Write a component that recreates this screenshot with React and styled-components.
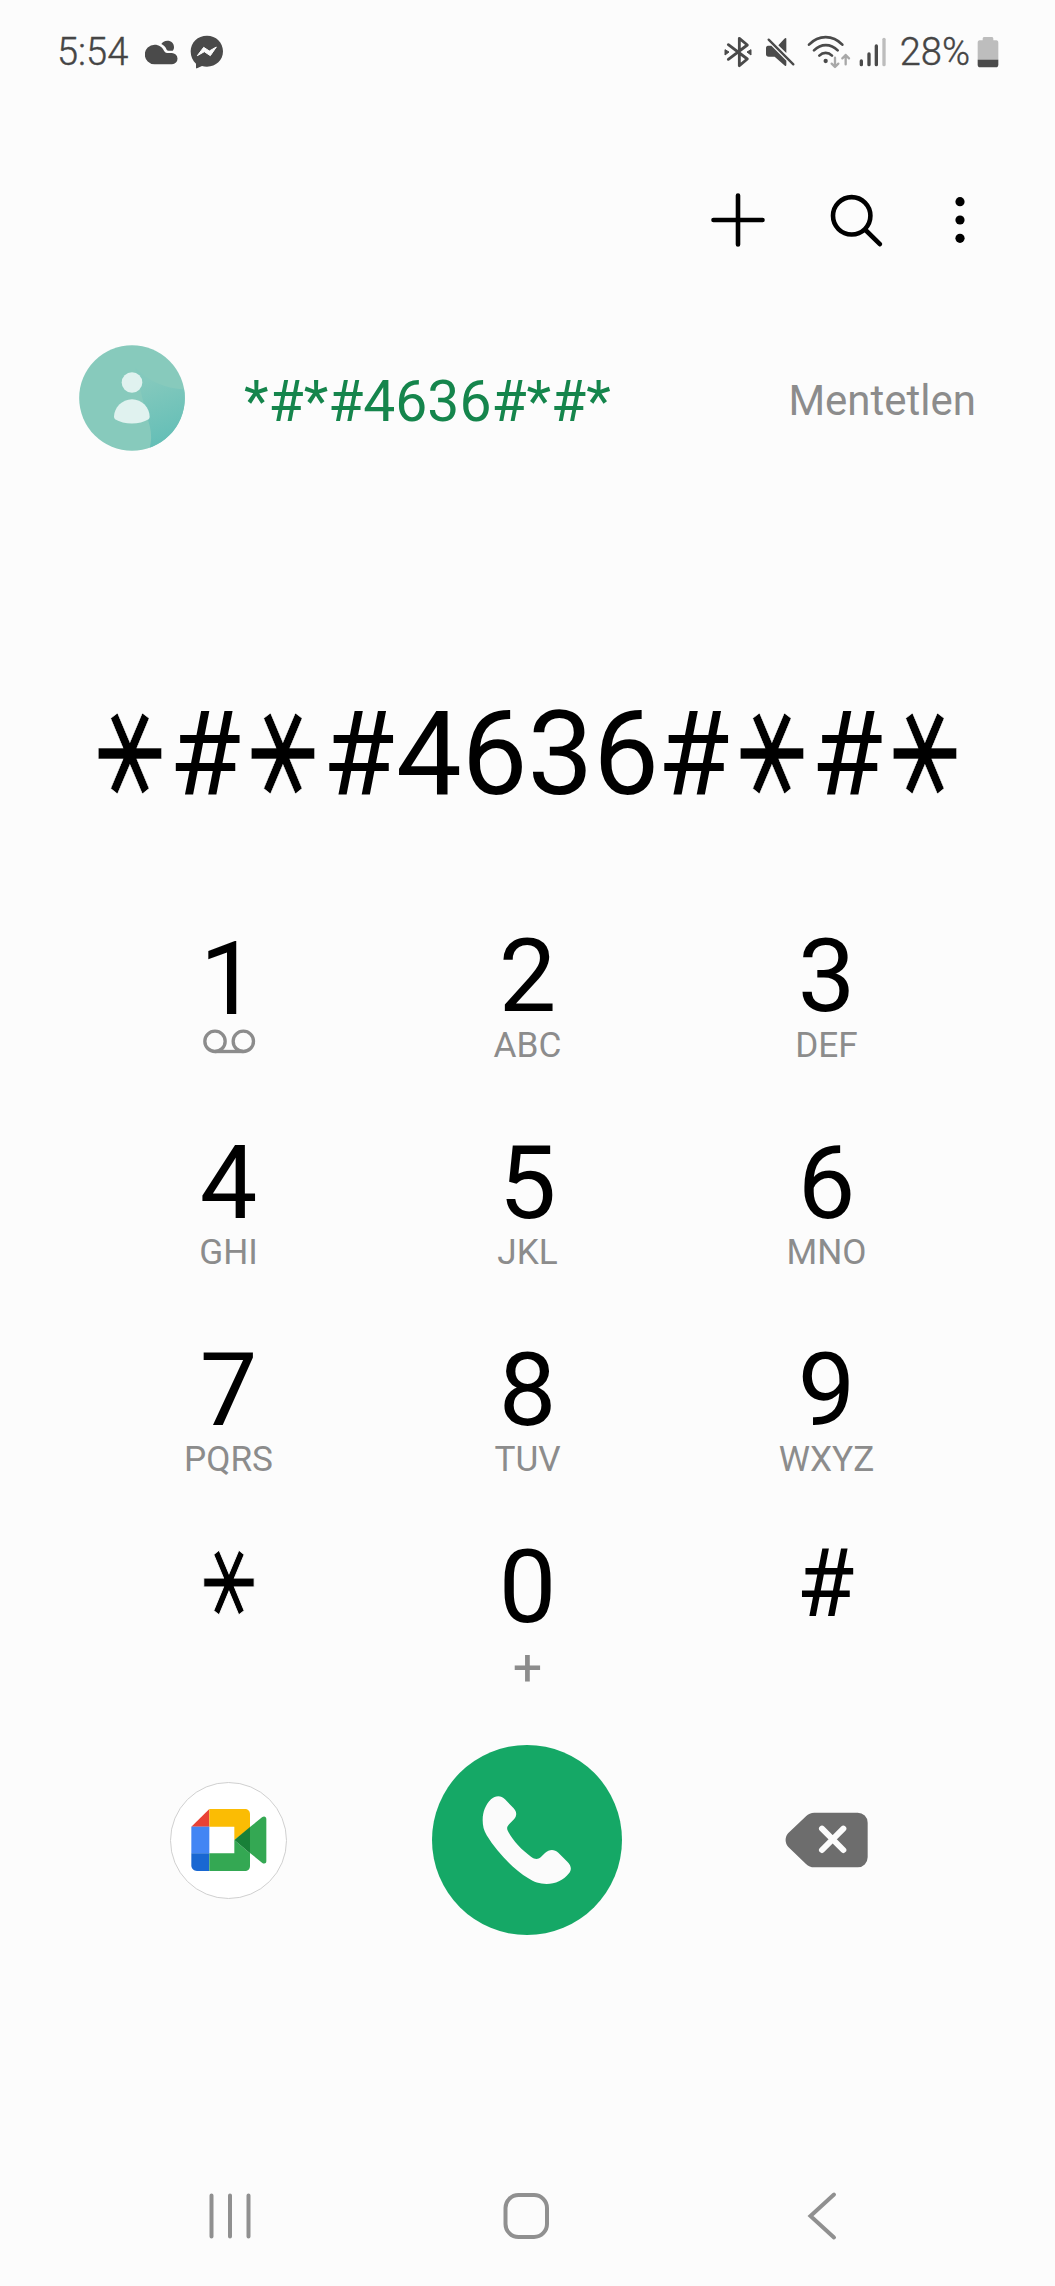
import React from "react";
import styled, { createGlobalStyle } from "styled-components";

const GlobalStyle = createGlobalStyle`
  html, body { margin: 0; background: #fcfcfc; }
  * { box-sizing: border-box; }
`;

const Screen = styled.main`
  width: 1055px;
  height: 2286px;
  display: flex;
  flex-direction: column;
  background: #fcfcfc;
  color: #000;
  font-family: Roboto, "Liberation Sans", sans-serif;
  overflow: hidden;
`;

const Icon = styled.svg`
  display: block;
  flex: none;
  width: ${(p) => p.$w}px;
  height: ${(p) => p.$h}px;
  margin-left: ${(p) => p.$gap || 0}px;
  margin-top: ${(p) => p.$lift || 0}px;
`;

const StatusBar = styled.header`
  height: 104px;
  display: flex;
  align-items: center;
  justify-content: space-between;
  padding: 0 56px 0 57px;
  color: #4a4a4a;
`;

const StatusGroup = styled.div`
  display: flex;
  align-items: center;
`;

const StatusText = styled.span`
  font-size: 38px;
  font-weight: 300;
  line-height: 44px;
  color: #454545;
  -webkit-text-stroke: 0.4px #454545;
  margin-left: ${(p) => p.$gap || 0}px;
`;

const Toolbar = styled.nav`
  height: 232px;
  display: flex;
  align-items: center;
  justify-content: flex-end;
  padding-right: 89px;
`;

const IconButton = styled.button`
  display: block;
  padding: 0;
  border: 0;
  background: none;
  margin-left: ${(p) => p.$gap || 0}px;
`;

const Suggestion = styled.section`
  height: 124px;
  display: flex;
  align-items: center;
  padding: 0 79px;
`;

const SuggestedNumber = styled.span`
  flex: 1;
  margin-left: 59px;
  padding-top: 7px;
  font-size: 57px;
  line-height: 66px;
  color: #15854c;
`;

const SavedState = styled.span`
  padding-top: 6px;
  font-size: 42px;
  line-height: 50px;
  color: #8c8c8c;
`;

const Display = styled.output`
  display: flex;
  justify-content: center;
  margin-top: 234px;
  height: 120px;
  font-size: 117px;
  line-height: 120px;
  white-space: nowrap;
`;

const Hash = styled.span`
  margin: 0 1.5px 0 -1.5px;
`;

const Star = styled.span`
  display: block;
  width: ${(p) => p.$w}px;
  font-family: "DejaVu Sans", sans-serif;
  font-size: ${(p) => p.$size}px;
  line-height: ${(p) => p.$line}px;
  text-align: center;
  -webkit-text-stroke: ${(p) => p.$trim}px #fcfcfc;
  transform: translateY(${(p) => -p.$rise}px) scaleY(1.38);
`;

const Keypad = styled.section`
  display: grid;
  grid-template-columns: repeat(3, 299px);
  grid-template-rows: 207px 207px 196.5px 207px;
  height: 818px;
  margin-top: 112px;
  padding-left: 79px;
`;

const Key = styled.button`
  display: flex;
  flex-direction: column;
  align-items: center;
  padding: ${(p) => p.$drop || 0}px ${(p) => p.$inset || 0}px 0 0;
  border: 0;
  background: none;
  color: #000;
  font-family: inherit;
`;

const Digit = styled.span`
  font-size: ${(p) => p.$size || 102.5}px;
  line-height: ${(p) => p.$line || 100}px;
`;

const Letters = styled.span`
  font-size: ${(p) => p.$size || 35.2}px;
  line-height: 38px;
  margin-top: ${(p) => p.$drop || 0}px;
  color: #8c8c8c;
`;

const Actions = styled.section`
  display: grid;
  grid-template-columns: repeat(3, 299px);
  align-items: center;
  justify-items: center;
  height: 192px;
  padding-left: 78.5px;
`;

const MeetButton = styled.button`
  display: flex;
  align-items: center;
  justify-content: center;
  width: 117px;
  height: 117px;
  padding: 0 0 0 1px;
  border: 1px solid #d0d0d0;
  border-radius: 50%;
  background: #fff;
`;

const CallButton = styled.button`
  display: flex;
  align-items: center;
  justify-content: center;
  width: 190.5px;
  height: 190.5px;
  padding: 0;
  border: 0;
  border-radius: 50%;
  background: #15a866;
`;

const NavBar = styled.footer`
  margin-top: auto;
  height: 141px;
  display: grid;
  grid-template-columns: repeat(3, 296px);
  align-items: center;
  justify-items: center;
  padding-left: 82px;
`;

const CloudIcon = () => (
  <Icon $w={33} $h={25} $gap={17} viewBox="316 58 99 75" fill="#4a4a4a">
    <path d="M345 72c13 0 23 7 28 18 3 6 8 7 14 7h9a17 17 0 0 1 1 34h-52a29 29 0 1 1 0-59z" />
    <path d="M365 70c3-6 10-10 18-10 12 0 20 8 20 19 0 5-1 8-4 11h-12c-3 0-5-1-6-3-3-8-9-13-16-17z" />
  </Icon>
);

const MessengerIcon = () => (
  <Icon $w={34} $h={34} $gap={12} viewBox="452 46 102 102">
    <path fill="#4a4a4a" d="M503 48c27 0 48 20 48 47s-21 46-48 46c-6 0-11-1-15-2l-15 7c-2 1-3 0-3-2v-12c-10-9-16-21-16-37 0-27 21-47 49-47z" />
    <path fill="#fcfcfc" stroke="#fcfcfc" strokeWidth="3" strokeLinejoin="round" d="M474 108l19-25 17 11 21-12-18 26-18-12z" />
  </Icon>
);

const BluetoothIcon = () => (
  <Icon $w={28} $h={32} viewBox="71 47 84 96">
    <path fill="none" stroke="#4a4a4a" strokeWidth="8.5" strokeLinecap="round" strokeLinejoin="round" d="M84 73l57 43-24 20V54l24 20-57 43" />
    <path fill="#4a4a4a" d="M74 88l12 7-12 9zM152 88l-12 7 12 9z" stroke="#4a4a4a" strokeWidth="3" strokeLinejoin="round" />
  </Icon>
);

const MuteIcon = () => (
  <Icon $w={30} $h={30} $gap={13} viewBox="195 51 90 90">
    <path fill="#4a4a4a" d="M204 77h10l45 45v12c0 4-3 5-6 2l-29-26h-18c-5 0-8-3-8-7V84c0-4 2-7 6-7zM259 56v43l-24-23 18-20c3-3 6-3 6 0z" />
    <path stroke="#4a4a4a" strokeWidth="7" strokeLinecap="round" d="M206 59l74 74" />
  </Icon>
);

const WifiIcon = () => (
  <Icon $w={44} $h={34} $gap={12} viewBox="324 42 132 102" fill="none" strokeLinecap="round">
    <g stroke="#4a4a4a" strokeWidth="8">
      <path d="M330 71c29-30 71-30 100 0" />
      <path d="M345 88c21-21 50-21 71 0" />
      <path d="M361 104c11-11 27-11 38 0" />
    </g>
    <circle cx="380" cy="120" r="6.5" fill="#4a4a4a" />
    <g stroke="#a8a8a8" strokeWidth="7" strokeLinejoin="round">
      <path d="M408 110v28M398 128l10 10 10-10" />
      <path d="M440 130v-28M430 112l10-10 10 10" />
    </g>
  </Icon>
);

const SignalIcon = () => (
  <Icon $w={28} $h={32} $gap={8} viewBox="480 46 84 96" strokeWidth="10" strokeLinecap="round">
    <g stroke="#4a4a4a">
      <path d="M487 121v11M510 100v32M532 76v56" />
    </g>
    <path stroke="#bdbdbd" d="M555 56v76" />
  </Icon>
);

const BatteryIcon = () => (
  <Icon $w={22} $h={32} $gap={7} viewBox="831 47 66 96">
    <path fill="#bdbdbd" d="M853 50h22c3 0 5 2 5 5v5h9c4 0 6 3 6 7v52h-62V67c0-4 2-7 6-7h9v-5c0-3 2-5 5-5z" />
    <path fill="#4a4a4a" d="M833 118h62v15c0 5-3 8-7 8h-48c-4 0-7-3-7-8z" />
  </Icon>
);

const PlusIcon = () => (
  <Icon $w={56} $h={56} viewBox="0 0 56 56" stroke="#000" strokeWidth="4.6" strokeLinecap="round">
    <path d="M28 3.5v49M3.5 28h49" />
  </Icon>
);

const SearchIcon = () => (
  <Icon $w={56} $h={56} viewBox="0 0 56 56" fill="none" stroke="#000" strokeWidth="4.6" strokeLinecap="round">
    <circle cx="23.7" cy="23.8" r="18.7" />
    <path d="M37.5 38l14.4 14.2" />
  </Icon>
);

const MoreIcon = () => (
  <Icon $w={12} $h={56} viewBox="0 0 12 56">
    <circle cx="6" cy="9.7" r="4.6" />
    <circle cx="6" cy="28" r="4.6" />
    <circle cx="6" cy="46.3" r="4.6" />
  </Icon>
);

const Avatar = () => (
  <Icon $w={106} $h={106} viewBox="57 43.5 318 318">
    <defs>
      <clipPath id="avatarClip"><circle cx="216" cy="202.5" r="158.5" /></clipPath>
      <linearGradient id="avatarShade" gradientUnits="userSpaceOnUse" x1="265" y1="150" x2="330" y2="320">
        <stop offset="0" stopColor="#84c9bd" />
        <stop offset="1" stopColor="#66bfb7" />
      </linearGradient>
    </defs>
    <g clipPath="url(#avatarClip)">
      <path fill="#87cabc" d="M50 40h330v330H50z" />
      <path fill="url(#avatarShade)" d="M225 110c40 42 90 64 155 67v190H264c14-34 12-70-4-110z" />
    </g>
    <circle cx="216" cy="156" r="31" fill="#e0f2ef" />
    <path fill="#e0f2ef" d="M216 206c30 0 53 25 53 53 0 3-1 5-3 7-27 17-74 17-101 0-2-2-3-4-3-7 0-28 24-53 54-53z" />
  </Icon>
);

const VoicemailIcon = () => (
  <Icon $w={54} $h={38} $lift={-5.5} viewBox="153 342 162 114" fill="none" stroke="#8c8c8c" strokeWidth="10">
    <circle cx="192" cy="394" r="30.5" />
    <circle cx="277" cy="394" r="30.5" />
    <path d="M192 424.5h85" />
  </Icon>
);

const MeetIcon = () => (
  <Icon $w={76} $h={62} viewBox="125 238 228 186">
    <path fill="#e94235" d="M126 291l54-53v53z" />
    <path fill="#fbbc04" d="M180 238h106c10 0 16 6 16 15v42l-47 36v-40h-75z" />
    <path fill="#4285f4" d="M126 291h54v80h-54z" />
    <path fill="#1967d2" d="M126 371h54v53h-37c-10 0-17-7-17-17z" />
    <path fill="#34a853" d="M180 371h75v-40l47 40v37c0 10-6 16-16 16H180z" />
    <path fill="#34a853" d="M302 292l36-29c6-5 13-2 13 5v127c0 7-7 9-13 4l-36-29z" />
    <path fill="#188038" d="M255 331l47-39v79z" />
  </Icon>
);

const PhoneIcon = () => (
  <Icon $w={90} $h={90} viewBox="216 193 270 270" fill="#fbfbfb">
    <path d="M265 197C272 197 279 200 285 206L311 233C321 244 321 256 312 266L298 280C290 288 290 294 294 302C310 332 336 359 363 378C374 386 383 387 392 380L405 367C418 355 433 355 445 366L472 393C485 406 485 417 477 428C460 450 436 460 410 460C388 460 372 454 355 443C309 414 262 366 230 314C221 299 218 285 218 268C218 243 227 222 243 206C250 200 257 197 265 197Z" />
  </Icon>
);

const BackspaceIcon = () => (
  <Icon $w={84} $h={56} $gap={1} viewBox="1124 247 252 168">
    <path fill="#6d6d6d" d="M1212 249H1342a30 30 0 0 1 30 30V383a30 30 0 0 1-30 30H1212C1202 413 1194 410 1187 403L1134 352C1123 340 1123 322 1134 310L1187 260C1194 253 1202 249 1212 249Z" />
    <path stroke="#fcfcfc" strokeWidth="18" strokeLinecap="round" d="M1235 297l64 64M1299 297l-64 64" />
  </Icon>
);

const RecentsIcon = () => (
  <Icon $w={48} $h={52} viewBox="0 0 48 52" stroke="#909090" strokeWidth="4" strokeLinecap="round">
    <path d="M5.5 5.5v41M24 5.5v41M42.5 5.5v41" />
  </Icon>
);

const HomeIcon = () => (
  <Icon $w={48} $h={52} viewBox="0 0 48 52" fill="none" stroke="#909090" strokeWidth="4">
    <rect x="3.5" y="5" width="41.5" height="42" rx="13" />
  </Icon>
);

const BackIcon = () => (
  <Icon $w={48} $h={52} viewBox="0 0 48 52" fill="none" stroke="#909090" strokeWidth="4" strokeLinecap="round" strokeLinejoin="miter">
    <path d="M36 4.5L12.5 26 36 47.5" />
  </Icon>
);

const LETTER_KEYS = [
  ["2", "ABC"], ["3", "DEF"],
  ["4", "GHI"], ["5", "JKL"], ["6", "MNO"],
  ["7", "PQRS"], ["8", "TUV"], ["9", "WXYZ"],
];

const DIALED = "*#*#4636#*#*";

const displayGlyph = (char, index) => {
  if (char === "*") {
    return <Star key={index} $w={81.3} $size={113} $line={120} $rise={16.2} $trim={0.4}>⚹</Star>;
  }
  return char === "#" ? <Hash key={index}>#</Hash> : <span key={index}>{char}</span>;
};

export default function App() {
  return (
    <>
      <GlobalStyle />
      <Screen>
        <StatusBar>
          <StatusGroup>
            <StatusText>5:54</StatusText>
            <CloudIcon />
            <MessengerIcon />
          </StatusGroup>
          <StatusGroup>
            <BluetoothIcon />
            <MuteIcon />
            <WifiIcon />
            <SignalIcon />
            <StatusText $gap={13}>28%</StatusText>
            <BatteryIcon />
          </StatusGroup>
        </StatusBar>

        <Toolbar>
          <IconButton aria-label="Add"><PlusIcon /></IconButton>
          <IconButton $gap={62} aria-label="Search"><SearchIcon /></IconButton>
          <IconButton $gap={70} aria-label="More"><MoreIcon /></IconButton>
        </Toolbar>

        <Suggestion>
          <Avatar />
          <SuggestedNumber>{DIALED}</SuggestedNumber>
          <SavedState>Mentetlen</SavedState>
        </Suggestion>

        <Display>{DIALED.split("").map(displayGlyph)}</Display>

        <Keypad>
          <Key $drop={3}><Digit>1</Digit><VoicemailIcon /></Key>
          {LETTER_KEYS.map(([digit, letters]) => (
            <Key key={digit}>
              <Digit>{digit}</Digit>
              <Letters>{letters}</Letters>
            </Key>
          ))}
          <Key><Star $w={90} $size={90} $line={100} $rise={16} $trim={0.8}>⚹</Star></Key>
          <Key>
            <Digit>0</Digit>
            <Letters $size={52} $drop={12}>+</Letters>
          </Key>
          <Key $inset={2}><Digit $size={94} $line={95}>#</Digit></Key>
        </Keypad>

        <Actions>
          <MeetButton aria-label="Meet"><MeetIcon /></MeetButton>
          <CallButton aria-label="Call"><PhoneIcon /></CallButton>
          <IconButton aria-label="Backspace"><BackspaceIcon /></IconButton>
        </Actions>

        <NavBar>
          <RecentsIcon />
          <HomeIcon />
          <BackIcon />
        </NavBar>
      </Screen>
    </>
  );
}
